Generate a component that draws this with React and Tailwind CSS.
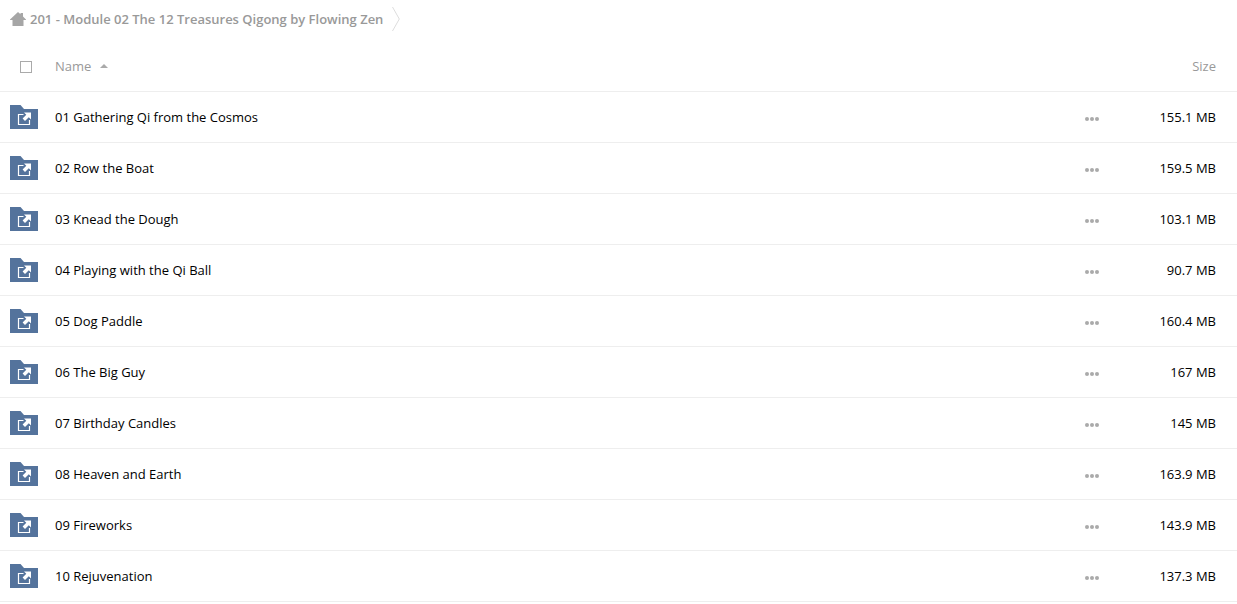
import React, { useState } from 'react'

const folders = [
  { name: '01 Gathering Qi from the Cosmos', size: '155.1 MB' },
  { name: '02 Row the Boat', size: '159.5 MB' },
  { name: '03 Knead the Dough', size: '103.1 MB' },
  { name: '04 Playing with the Qi Ball', size: '90.7 MB' },
  { name: '05 Dog Paddle', size: '160.4 MB' },
  { name: '06 The Big Guy', size: '167 MB' },
  { name: '07 Birthday Candles', size: '145 MB' },
  { name: '08 Heaven and Earth', size: '163.9 MB' },
  { name: '09 Fireworks', size: '143.9 MB' },
  { name: '10 Rejuvenation', size: '137.3 MB' },
]

function HomeIcon() {
  return (
    <svg width="16" height="14" viewBox="0 0 16 14" fill="#a6a6a6">
      <path d="M8 0 L10.5 2.3 V1 H13 V4.6 L16 7.5 V8 H13.5 V14 H2.5 V8 H0 V7.5 Z" />
    </svg>
  )
}

function SharedFolderIcon() {
  return (
    <svg width="28" height="24" viewBox="0 0 28 24">
      <path d="M0 0 H10.5 L14 4 H28 V24 H0 Z" fill="#54739c" />
      <path
        d="M13.5 9.5 H8.5 V19.5 H19.5 V15"
        fill="none"
        stroke="#fff"
        strokeWidth="1.2"
      />
      <path
        d="M14 7.5 H21 V14.5 L18.8 12.3 L15 16 L12.6 13.6 L16.3 9.8 Z"
        fill="#fff"
      />
    </svg>
  )
}

function DotsIcon() {
  return (
    <svg width="14" height="4" viewBox="0 0 14 4" fill="#aaaaaa">
      <circle cx="2" cy="2" r="2" />
      <circle cx="7" cy="2" r="2" />
      <circle cx="12" cy="2" r="2" />
    </svg>
  )
}

function Breadcrumb() {
  return (
    <nav className="flex h-10 items-center pb-[2px] pl-[10px]">
      <a
        href="#"
        className="flex items-center gap-1 font-semibold text-[#999999]"
      >
        <HomeIcon />
        201 - Module 02 The 12 Treasures Qigong by Flowing Zen
      </a>
      <svg
        className="ml-[9px]"
        width="8"
        height="24"
        viewBox="0 0 8 24"
        fill="none"
        stroke="#dddddd"
      >
        <path d="M0.5 0 L7.3 12 L0.5 24" />
      </svg>
    </nav>
  )
}

export default function App() {
  const [allSelected, setAllSelected] = useState(false)

  return (
    <div className="bg-white font-['Open_Sans',sans-serif] text-[13px] leading-5 text-black">
      <Breadcrumb />
      <table className="w-full border-separate border-spacing-0">
        <thead>
          <tr className="h-[52px] text-[#999999]">
            <th className="w-[55px] border-b border-[#eeeeee] pt-[2px] pl-5 text-left">
              <input
                type="checkbox"
                aria-label="Select all"
                checked={allSelected}
                onChange={e => setAllSelected(e.target.checked)}
                className="block size-3 appearance-none border border-[#aaaaaa] bg-white checked:bg-[#54739c]"
              />
            </th>
            <th className="border-b border-[#eeeeee] text-left font-normal">
              <button type="button" className="flex items-center gap-[9px]">
                Name
                <svg width="8" height="4" viewBox="0 0 8 4" fill="#aaaaaa">
                  <path d="M4 0 L8 4 H0 Z" />
                </svg>
              </button>
            </th>
            <th className="w-[30px] border-b border-[#eeeeee]" />
            <th className="w-[130px] border-b border-[#eeeeee] pr-[21px] text-right font-normal">
              Size
            </th>
          </tr>
        </thead>
        <tbody>
          {folders.map(folder => (
            <tr key={folder.name} className="h-[51px]">
              <td className="border-b border-[#eeeeee] pl-[10px]">
                <SharedFolderIcon />
              </td>
              <td className="border-b border-[#eeeeee]">
                <a href="#">{folder.name}</a>
              </td>
              <td className="border-b border-[#eeeeee]">
                <button
                  type="button"
                  aria-label={`More actions for ${folder.name}`}
                  className="flex h-6 w-full items-end justify-center pb-2"
                >
                  <DotsIcon />
                </button>
              </td>
              <td className="border-b border-[#eeeeee] pr-[21px] text-right">
                {folder.size}
              </td>
            </tr>
          ))}
        </tbody>
      </table>
    </div>
  )
}
